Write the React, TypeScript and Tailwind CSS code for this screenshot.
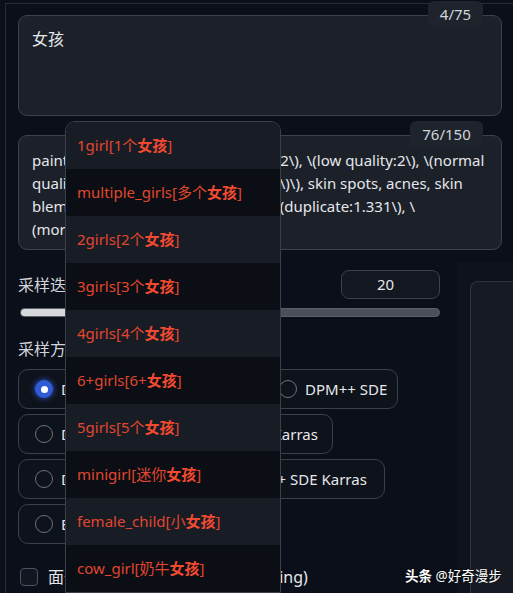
import React from "react";

const tags: [string, string][] = [
  ["1girl", "1个"],
  ["multiple_girls", "多个"],
  ["2girls", "2个"],
  ["3girls", "3个"],
  ["4girls", "4个"],
  ["6+girls", "6+"],
  ["5girls", "5个"],
  ["minigirl", "迷你"],
  ["female_child", "小"],
  ["cow_girl", "奶牛"],
];

function Radio({ checked }: { checked?: boolean }) {
  if (checked) {
    return (
      <span className="flex h-[18px] w-[18px] shrink-0 items-center justify-center rounded-full bg-[#2f5bd6] shadow-[0_0_6px_#2f5bd6]">
        <span className="h-[7px] w-[7px] rounded-full bg-white" />
      </span>
    );
  }
  return (
    <span className="h-[18px] w-[18px] shrink-0 rounded-full border border-[#6b7280]" />
  );
}

function SamplerOption({
  label,
  width,
  checked,
}: {
  label: string;
  width: string;
  checked?: boolean;
}) {
  return (
    <div
      className={`flex h-[40px] items-center gap-[8px] overflow-hidden whitespace-nowrap rounded-[10px] border border-[#3a404c] bg-[#0e121a] pl-[16px] text-[15px] text-[#e5e7eb] ${width}`}
    >
      <Radio checked={checked} />
      <span>{label}</span>
    </div>
  );
}

export default function App() {
  return (
    <div className="relative h-[593px] w-[513px] overflow-hidden bg-[#0b0f19] font-['Noto_Sans','Noto_Sans_CJK_SC',sans-serif]">
      <div className="ml-[5px] mt-[3px] h-full border-l border-t border-[#272c36] pl-[12px] pr-[11px] pt-[11px]">
        {/* prompt */}
        <div className="relative h-[101px] rounded-[9px] border border-[#3b414d] bg-[#1b2029] px-[13px] pt-[11px] text-[16px] text-[#e5e7eb]">
          女孩
          <div className="absolute -top-[15px] right-[18px] flex h-[26px] w-[55px] items-center justify-center rounded-[6px] bg-[#1e232c] text-[15px] text-[#d1d5db]">
            4/75
          </div>
        </div>

        {/* negative prompt */}
        <div className="relative mt-[19px] h-[115px] rounded-[9px] border border-[#3b414d] bg-[#1b2029] px-[13px] pt-[13px] text-[15px] leading-[23px] text-[#e5e7eb]">
          <div className="whitespace-nowrap">
            paintings, sketches, \(worst quality:2\), \(low quality:2\), \(normal
          </div>
          <div className="whitespace-nowrap">
            quality:2\), lowres, \(\(monochrome\)\), skin spots, acnes, skin
          </div>
          <div className="whitespace-nowrap">
            blemishes, age spots, glans, nsfw, \(duplicate:1.331\), \
          </div>
          <div className="whitespace-nowrap">(morbid:1.21\), \(mutilated:1.21\)</div>
          <div className="absolute -top-[15px] right-[18px] flex h-[26px] w-[73px] items-center justify-center rounded-[6px] bg-[#1e232c] text-[15px] text-[#d1d5db]">
            76/150
          </div>
        </div>

        {/* settings */}
        <div className="mt-[20px] flex gap-[17px]">
          <div className="w-[422px] shrink-0">
            <div className="flex items-center justify-between">
              <span className="text-[16px] text-[#d1d5db]">采样迭代步数 (Steps)</span>
              <div className="flex h-[29px] w-[99px] items-center justify-center rounded-[8px] border border-[#3b414d] bg-[#121720] pr-[10px] text-[15px] text-[#e5e7eb]">
                20
              </div>
            </div>
            <div className="ml-[2px] mt-[9px] h-[9px] w-[420px] rounded-full border border-[#5b6069] bg-[#4a4f58]">
              <div className="h-full w-[56px] rounded-full bg-[#d6d8dc]" />
            </div>

            <div className="mt-[22px] text-[16px] leading-[20px] text-[#d1d5db]">
              采样方法 (Sampler)
            </div>
            <div className="mt-[10px] flex flex-col gap-[5px]">
              <div className="flex gap-[6px]">
                <SamplerOption label="DPM++ 2M Karras" width="w-[238px]" checked />
                <SamplerOption label="DPM++ SDE" width="w-[136px]" />
              </div>
              <SamplerOption label="DPM++ 2M a SDE Exponential Karras" width="w-[315px]" />
              <SamplerOption label="DPM++ 2M SDE Heun v2 DPM++ SDE Karras" width="w-[367px]" />
              <SamplerOption label="Euler a" width="w-[200px]" />
            </div>

            <div className="ml-[2px] mt-[21px] flex items-center text-[16px] text-[#e5e7eb]">
              <span className="h-[18px] w-[18px] rounded-[4px] border border-[#4b5160] bg-[#111620]" />
              <span className="ml-[10px]">面部修复</span>
              <span className="ml-[65px] h-[18px] w-[18px] rounded-[4px] border border-[#4b5160] bg-[#111620]" />
              <span className="ml-[10px]">可平铺 (Tiling)</span>
            </div>
          </div>

          <div className="-mr-[11px] -mt-[8px] flex-1 bg-[#0e131b] pl-[13px] pt-[19px]">
            <div className="h-[330px] rounded-tl-[8px] border-l border-t border-[#2e343f] bg-[#161b23]" />
          </div>
        </div>
      </div>

      {/* autocomplete dropdown */}
      <div className="absolute left-[65px] top-[121px] w-[216px] overflow-hidden rounded-t-[10px] border border-[#3a3f49] bg-[#0b0e14]">
        {tags.map(([tag, pre], i) => (
          <div
            key={tag}
            className={`flex h-[47px] items-center whitespace-nowrap pl-[11px] text-[15px] text-[#e2462f] ${
              i % 2 === 0 ? "bg-[#181c25]" : "bg-[#0b0e14]"
            }`}
          >
            {tag}[{pre}
            <b className="font-bold text-[#f24a30]">女孩</b>]
          </div>
        ))}
      </div>

      {/* watermark */}
      <div className="absolute left-[405px] top-[566px] text-[13.5px] text-white [text-shadow:0_0_2px_rgba(0,0,0,0.8)]">
        <b className="font-bold">头条</b> @好奇漫步
      </div>
    </div>
  );
}
